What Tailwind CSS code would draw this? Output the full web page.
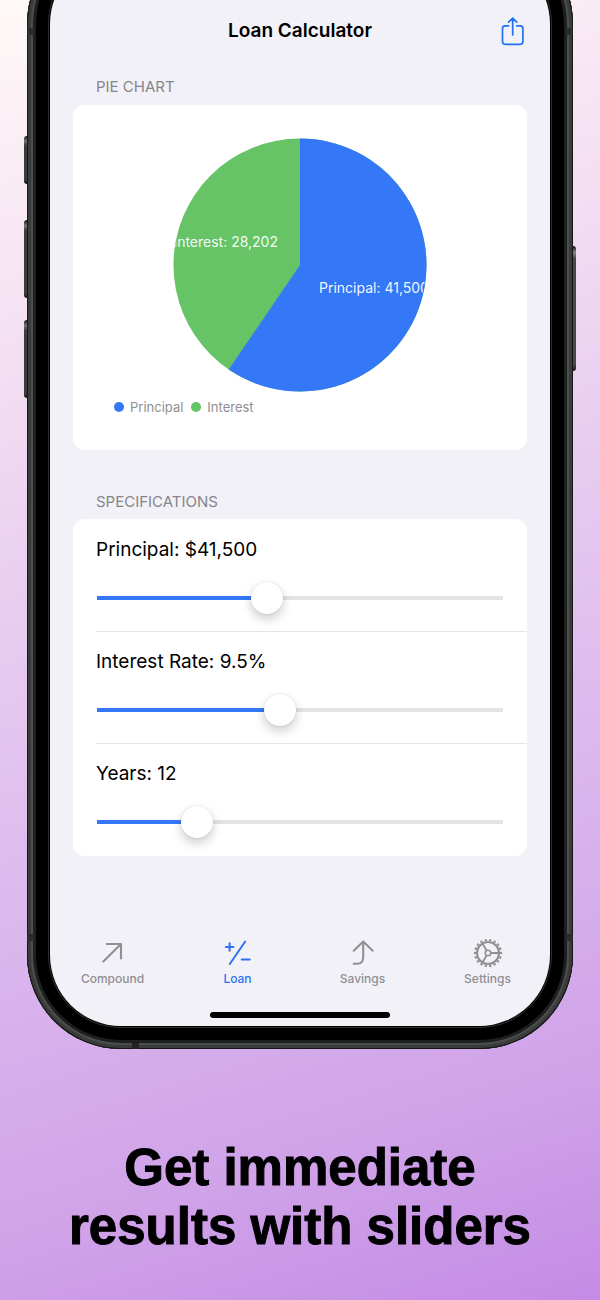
<!DOCTYPE html>
<html lang="en">
<head>
<meta charset="utf-8">
<meta name="viewport" content="width=device-width, initial-scale=1">
<title>Loan Calculator</title>
<script src="https://cdn.jsdelivr.net/npm/@tailwindcss/browser@4"></script>
</head>
<body class="font-[Inter,'Liberation_Sans',sans-serif] text-black">
<main class="min-h-screen overflow-hidden bg-[linear-gradient(163deg,#fff9f7_0%,#f3def2_25%,#dfbdee_57%,#d0a3e9_84%,#c48ce5_100%)]">

  <!-- Phone body -->
  <div class="relative mx-[27px] -mt-[70px] rounded-[94px] bg-black p-[23px] shadow-[inset_0_0_0_1px_#151616,inset_0_0_0_4px_#3a3c3c,inset_0_0_0_6px_#4c4e4e,inset_0_0_0_9px_#1e1f1f]">
    <span class="absolute top-[206px] -left-[3px] h-12 w-[3px] rounded-l-sm bg-[linear-gradient(#111,#777_10%,#3a3d3c_20%,#3a3d3c_90%,#111)]"></span>
    <span class="absolute top-[290px] -left-[3px] h-[78px] w-[3px] rounded-l-sm bg-[linear-gradient(#111,#777_7%,#3a3d3c_14%,#3a3d3c_94%,#111)]"></span>
    <span class="absolute top-[390px] -left-[3px] h-[78px] w-[3px] rounded-l-sm bg-[linear-gradient(#111,#777_7%,#3a3d3c_14%,#3a3d3c_94%,#111)]"></span>
    <span class="absolute top-[316px] -right-[3px] h-[125px] w-[3px] rounded-r-sm bg-[linear-gradient(#111,#888_5%,#484a4a_10%,#484a4a_95%,#111)]"></span>
    <span class="absolute top-[98px] left-0 h-[7px] w-[7px] bg-[#2a2b2b]"></span>
    <span class="absolute top-[98px] right-0 h-[7px] w-[7px] bg-[#2a2b2b]"></span>
    <span class="absolute top-[1004px] left-0 h-[7px] w-[7px] bg-[#2a2b2b]"></span>
    <span class="absolute top-[1004px] right-0 h-[7px] w-[7px] bg-[#2a2b2b]"></span>
    <span class="absolute bottom-0 left-[105px] h-[6px] w-[7px] bg-[#222]"></span>

    <!-- Screen -->
    <div class="flex flex-col rounded-[71px] bg-[#f2f1f7] pt-[47px] pb-2 shadow-[0_0_0_1px_#000,0_0_0_2px_#2c2e2e]">
      <header class="grid h-[61px] grid-cols-[1fr_auto_1fr] items-center px-[25px]">
        <h1 class="col-start-2 text-[19px] leading-6 font-semibold">Loan Calculator</h1>
        <button type="button" aria-label="Share" class="justify-self-end text-[#1f72f8]">
          <svg width="25" height="30" viewBox="0 0 25 30" fill="none" stroke="currentColor" stroke-width="1.7" stroke-linecap="round" stroke-linejoin="round"><path d="M8.6 9.9H5.2a2.7 2.7 0 0 0-2.7 2.7v13a2.7 2.7 0 0 0 2.7 2.7h15a2.7 2.7 0 0 0 2.7-2.7v-13a2.7 2.7 0 0 0-2.7-2.7h-3.4M12.7 19V2.4M8.6 6.2l4.1-4 4.1 4"/></svg>
        </button>
      </header>

      <section class="px-[23px] pt-4">
        <h2 class="mb-2 px-[23px] text-[15px] leading-5 text-[#86858b]">PIE CHART</h2>
        <div class="rounded-xl bg-white pt-[33px] pb-[33px]">
          <svg class="mx-auto block" width="254" height="254" viewBox="-127 -127 254 254" role="img" aria-label="Principal and interest shares">
            <defs><clipPath id="disc"><circle r="126"/></clipPath></defs>
            <circle r="126.5" fill="#66c466"/>
            <path d="M0 0V-126.5A126.5 126.5 0 1 1 -71.3 104.5Z" fill="#3578f7"/>
            <g fill="#fff" font-size="14" fill-opacity=".95" clip-path="url(#disc)">
              <text x="-22" y="-18" text-anchor="end">Interest: 28,202</text>
              <text x="19" y="28">Principal: 41,500</text>
            </g>
          </svg>
          <ul class="mt-[5px] flex gap-2 px-[41px] text-[13px] leading-5 text-[#8e8e92]">
            <li class="flex items-center gap-[6px]"><span class="size-[10px] rounded-full bg-[#3578f7]"></span>Principal</li>
            <li class="flex items-center gap-[6px]"><span class="size-[10px] rounded-full bg-[#66c466]"></span>Interest</li>
          </ul>
        </div>
      </section>

      <section class="px-[23px] pt-[42px]">
        <h2 class="mb-[7px] px-[23px] text-[15px] leading-5 text-[#86858b]">SPECIFICATIONS</h2>
        <div class="rounded-xl bg-white pt-px pl-[23px]">
          <div class="flex h-[112px] flex-col border-b border-[#e4e4e6] pt-[18px] pr-6">
            <label for="principal" class="text-[19px] leading-6">Principal: $41,500</label>
            <input id="principal" type="range" min="500" max="100000" step="500" value="41500" class="mt-5 ml-px h-8 appearance-none rounded-sm bg-[linear-gradient(#3578f7,#3578f7),linear-gradient(#e3e3e4,#e3e3e4)] bg-[length:42%_4px,100%_4px] bg-[position:left_center,left_center] bg-no-repeat [&::-webkit-slider-thumb]:size-8 [&::-webkit-slider-thumb]:appearance-none [&::-webkit-slider-thumb]:rounded-full [&::-webkit-slider-thumb]:bg-white [&::-webkit-slider-thumb]:shadow-[0_0_2px_#0002,0_5px_11px_#0003]">
          </div>
          <div class="flex h-[112px] flex-col border-b border-[#e4e4e6] pt-[18px] pr-6">
            <label for="rate" class="text-[19px] leading-6">Interest Rate: 9.5%</label>
            <input id="rate" type="range" min="1" max="20" step="0.5" value="9.5" class="mt-5 ml-px h-8 appearance-none rounded-sm bg-[linear-gradient(#3578f7,#3578f7),linear-gradient(#e3e3e4,#e3e3e4)] bg-[length:45%_4px,100%_4px] bg-[position:left_center,left_center] bg-no-repeat [&::-webkit-slider-thumb]:size-8 [&::-webkit-slider-thumb]:appearance-none [&::-webkit-slider-thumb]:rounded-full [&::-webkit-slider-thumb]:bg-white [&::-webkit-slider-thumb]:shadow-[0_0_2px_#0002,0_5px_11px_#0003]">
          </div>
          <div class="flex h-[112px] flex-col pt-[18px] pr-6">
            <label for="years" class="text-[19px] leading-6">Years: 12</label>
            <input id="years" type="range" min="1" max="50" step="1" value="12" class="mt-5 ml-px h-8 appearance-none rounded-sm bg-[linear-gradient(#3578f7,#3578f7),linear-gradient(#e3e3e4,#e3e3e4)] bg-[length:24%_4px,100%_4px] bg-[position:left_center,left_center] bg-no-repeat [&::-webkit-slider-thumb]:size-8 [&::-webkit-slider-thumb]:appearance-none [&::-webkit-slider-thumb]:rounded-full [&::-webkit-slider-thumb]:bg-white [&::-webkit-slider-thumb]:shadow-[0_0_2px_#0002,0_5px_11px_#0003]">
          </div>
        </div>
      </section>

      <nav class="mt-[82px] grid grid-cols-4 text-[12px] leading-4 font-medium text-[#8f8f94]">
        <a href="#compound" class="flex flex-col items-center gap-[3px]">
          <svg width="30" height="30" viewBox="0 0 30 30" fill="none" stroke="currentColor" stroke-width="2.1" stroke-linecap="round" stroke-linejoin="round"><path d="M5.3 23.5 23 6M8.8 6H23v14.5"/></svg>
          Compound
        </a>
        <a href="#loan" aria-current="page" class="flex flex-col items-center gap-[3px] text-[#2c72f6]">
          <svg width="30" height="30" viewBox="0 0 30 30" fill="none" stroke="currentColor" stroke-width="2" stroke-linecap="round"><path d="M22.2 3.5 6.8 26M2.8 9h7.6M6.6 5.2v7.6M18.7 21.6h8"/></svg>
          Loan
        </a>
        <a href="#savings" class="flex flex-col items-center gap-[3px]">
          <svg width="30" height="30" viewBox="0 0 30 30" fill="none" stroke="currentColor" stroke-width="2.1" stroke-linecap="round" stroke-linejoin="round"><path d="M5.7 25.8h3.1c4.4 0 6.4-2.3 6.4-6.8V3.5M5.7 12.7l9.5-9.3 9.5 9.3"/></svg>
          Savings
        </a>
        <a href="#settings" class="flex flex-col items-center gap-[3px]">
          <svg width="30" height="30" viewBox="-15 -15 30 30" fill="none" stroke="currentColor"><circle r="11" stroke-width="2"/><circle r="13" stroke-width="2.2" pathLength="36" stroke-dasharray="1 1" stroke-dashoffset=".5"/><circle r="2.8" stroke-width="1.6"/><path d="M2.8 0H11M-1.4-2.4-5.5-9.5M-1.4 2.4-5.5 9.5" stroke-width="1.8"/></svg>
          Settings
        </a>
      </nav>
      <div class="mx-auto mt-[25px] h-[6px] w-[180px] rounded-full bg-black"></div>
    </div>
  </div>

  <p class="pt-[89px] pb-11 text-center font-['Arial_Rounded_MT_Bold','Liberation_Sans',sans-serif] text-[51px] leading-[59px] font-bold [-webkit-text-stroke:1px_black]">Get immediate<br>results with sliders</p>
</main>
</body>
</html>
